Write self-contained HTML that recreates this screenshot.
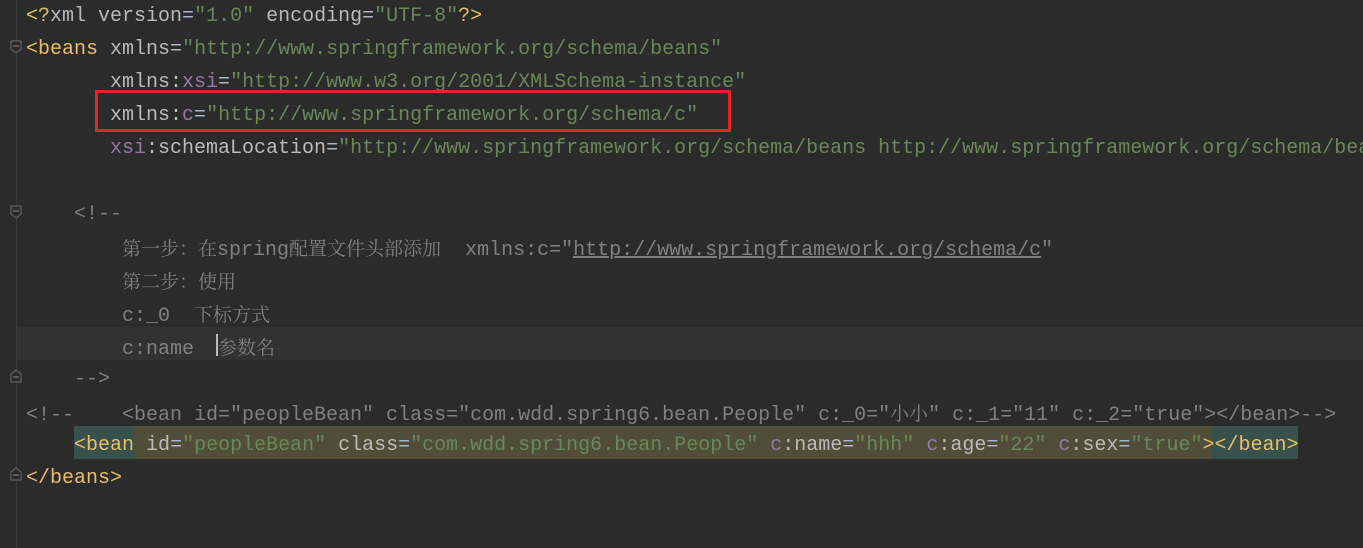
<!DOCTYPE html><html><head><meta charset="utf-8"><style>
html{overflow:hidden}
body{margin:0;width:1363px;height:548px;background:#2b2b2b;overflow:hidden;position:relative;font-family:"Liberation Mono",monospace;font-size:20px;}
.l{position:absolute;left:26px;right:0;overflow:hidden;height:33px;line-height:33px;white-space:pre;color:#a9b7c6;}
.t{color:#e8bf6a}.a{color:#bababa}.v{color:#6a8759}.n{color:#9876aa}.c{color:#808080}
.z{font-family:"Noto Serif CJK SC","Noto Sans CJK SC",serif;font-size:19px;color:#808080}
.u{text-decoration:underline}
.gut{position:absolute;left:16px;top:0;width:1px;height:548px;background:#3c3c3c}
.fold{position:absolute;left:10px;width:12px;height:14px;}
</style></head><body>
<div class="gut"></div>
<div style="position:absolute;left:17px;top:327px;width:1346px;height:33px;background:#323232"></div>
<div style="position:absolute;left:74px;top:426px;width:60px;height:33px;background:#3a504c"></div>
<div style="position:absolute;left:134px;top:426px;width:1078px;height:33px;background:#504e38"></div>
<div style="position:absolute;left:1212px;top:426px;width:86px;height:33px;background:#3a504c"></div>
<svg class="fold" style="top:40px" viewBox="0 0 12 14"><path d="M1 1H11V9L6 13L1 9Z" fill="#2b2b2b" stroke="#6a6a6a"/><path d="M3 6H9" stroke="#8a8a8a"/></svg>
<svg class="fold" style="top:205px" viewBox="0 0 12 14"><path d="M1 1H11V9L6 13L1 9Z" fill="#2b2b2b" stroke="#6a6a6a"/><path d="M3 6H9" stroke="#8a8a8a"/></svg>
<svg class="fold" style="top:369px" viewBox="0 0 12 14"><path d="M1 13H11V5L6 1L1 5Z" fill="#2b2b2b" stroke="#6a6a6a"/><path d="M3 8H9" stroke="#8a8a8a"/></svg>
<svg class="fold" style="top:467px" viewBox="0 0 12 14"><path d="M1 13H11V5L6 1L1 5Z" fill="#2b2b2b" stroke="#6a6a6a"/><path d="M3 8H9" stroke="#8a8a8a"/></svg>
<div class="l" style="top:0px"><span class="t">&lt;?</span><span class="a">xml version</span>=<span class="v">"1.0"</span> <span class="a">encoding</span>=<span class="v">"UTF-8"</span><span class="t">?&gt;</span></div>
<div class="l" style="top:33px"><span class="t">&lt;beans</span> <span class="a">xmlns</span>=<span class="v">"http://www.springframework.org/schema/beans"</span></div>
<div class="l" style="top:66px">       <span class="a">xmlns:</span><span class="n">xsi</span>=<span class="v">"http://www.w3.org/2001/XMLSchema-instance"</span></div>
<div class="l" style="top:99px">       <span class="a">xmlns:</span><span class="n">c</span>=<span class="v">"http://www.springframework.org/schema/c"</span></div>
<div class="l" style="top:132px">       <span class="n">xsi</span><span class="a">:schemaLocation</span>=<span class="v">"http://www.springframework.org/schema/beans http://www.springframework.org/schema/beans/spring-beans.xsd"</span></div>
<div class="l c" style="top:198px">    &lt;!--</div>
<div class="l c" style="top:231px">        <span class="z">第一步：在</span>spring<span class="z">配置文件头部添加</span>  xmlns:c="<span class="u">http://www.springframework.org/schema/c</span>"</div>
<div class="l c" style="top:264px">        <span class="z">第二步：使用</span></div>
<div class="l c" style="top:297px">        c:_0  <span class="z">下标方式</span></div>
<div class="l c" style="top:330px">        c:name  <span class="z">参数名</span></div>
<div style="position:absolute;left:216px;top:334px;width:2px;height:22px;background:#bbb"></div>
<div class="l c" style="top:363px">    --&gt;</div>
<div class="l c" style="top:396px">&lt;!--    &lt;bean id="peopleBean" class="com.wdd.spring6.bean.People" c:_0="<span class="z">小小</span>" c:_1="11" c:_2="true"&gt;&lt;/bean&gt;--&gt;</div>
<div class="l" style="top:429px">    <span class="t">&lt;bean</span> <span class="a">id</span>=<span class="v">"peopleBean"</span> <span class="a">class</span>=<span class="v">"com.wdd.spring6.bean.People"</span> <span class="n">c</span><span class="a">:name</span>=<span class="v">"hhh"</span> <span class="n">c</span><span class="a">:age</span>=<span class="v">"22"</span> <span class="n">c</span><span class="a">:sex</span>=<span class="v">"true"</span><span class="t">&gt;&lt;/bean&gt;</span></div>
<div class="l" style="top:462px"><span class="t">&lt;/beans&gt;</span></div>
<div style="position:absolute;left:95px;top:90px;width:630px;height:36px;border:3px solid #e3242b"></div>
</body></html>
